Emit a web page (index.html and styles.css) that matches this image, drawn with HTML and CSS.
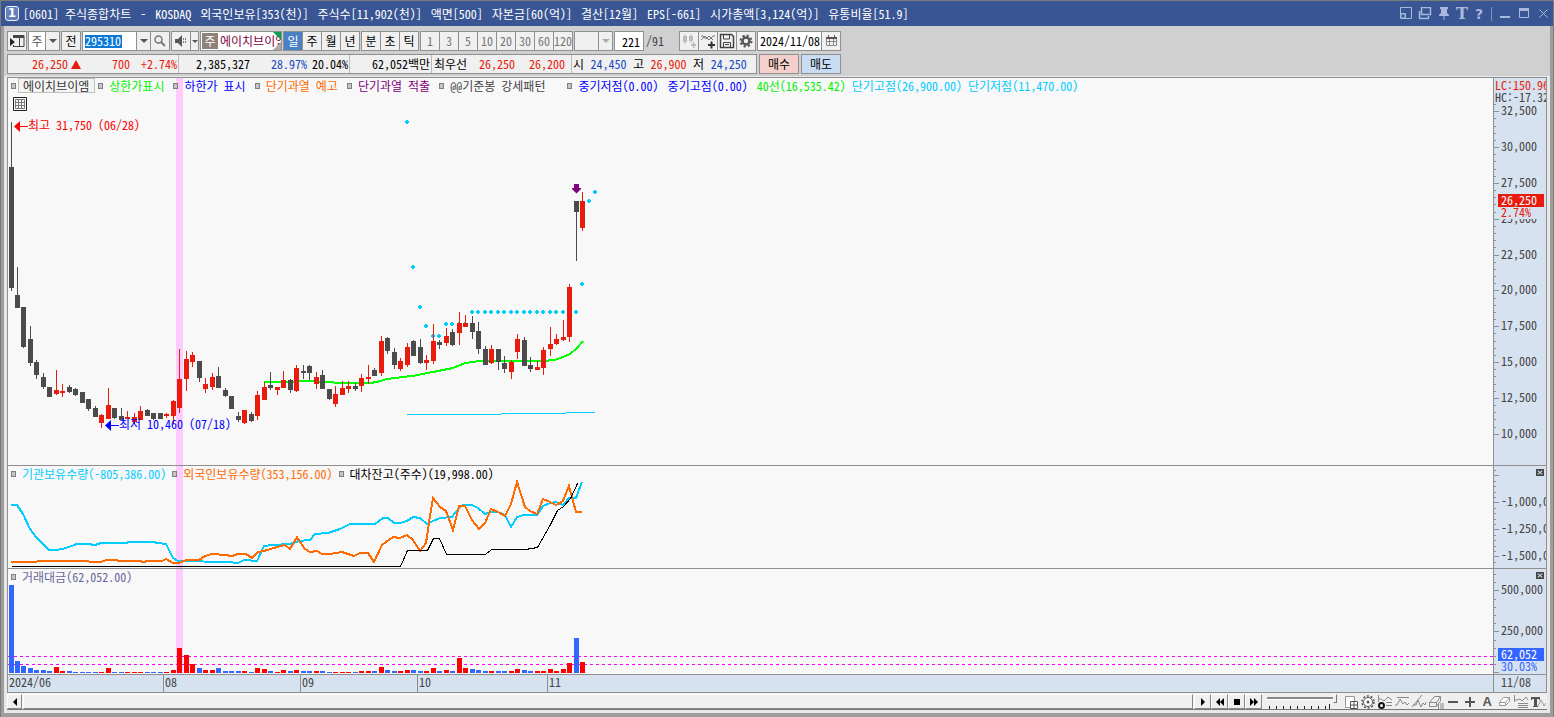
FILE: index.html
```
<!DOCTYPE html>
<html lang="ko">
<head>
<meta charset="utf-8">
<title>[0601] 주식종합차트</title>
<link rel="stylesheet" href="styles.css">
</head>
<body>
<div class="window">
  <header class="titlebar">
    <span class="win-num">1</span>
    <h1 class="title"><span>[0601] 주식종합차트</span> <span>-</span> <span>KOSDAQ</span> <span>외국인보유[353(천)]</span> <span>주식수[11,902(천)]</span> <span>액면[500]</span> <span>자본금[60(억)]</span> <span>결산[12월]</span> <span>EPS[-661]</span> <span>시가총액[3,124(억)]</span> <span>유통비율[51.9]</span></h1>
    <div class="win-tools">
      <button class="wbtn" aria-label="화면 배치"><svg width="13" height="13"><path d="M.5 .5h11v11H.5zM.5 6.500h5v5" /><path d="M1 7h4v4H1z" fill="#3a5593"/></svg></button>
      <button class="wbtn" aria-label="화면 복사"><svg width="14" height="13"><path d="M3.500 .5h9v7h-9zM1.500 4v7.500h9V9" stroke-width="1.500"/></svg></button>
      <button class="wbtn" aria-label="고정"><svg width="12" height="14"><path d="M2 0h8v2H9v4l2 2v1H1V8l2-2V2H2zM5.500 9h1v4h-1z" class="solid"/></svg></button>
      <button class="wbtn serif" aria-label="글꼴">T</button>
      <button class="wbtn quest" aria-label="도움말">?</button>
      <span class="wsep"></span>
      <button class="wbtn" aria-label="최소화"><svg width="11" height="13"><path d="M0 9h10v2H0z" class="solid"/></svg></button>
      <button class="wbtn" aria-label="최대화"><svg width="11" height="13"><path d="M.5 2.500h9v8h-9z"/><path d="M0 1h10v3H0z" class="solid"/></svg></button>
      <button class="wbtn" aria-label="닫기"><svg width="11" height="13"><path d="M1.500 2.500l8 8M9.500 2.500l-8 8"/></svg></button>
    </div>
  </header>

  <section class="toolbar">
    <div class="row">
      <button class="box sq" aria-label="목록 열기"><svg width="15" height="14"><path d="M3.500 1v2M3.500 11v2M3 1.500h11v11H3M9.500 2v10" stroke="#444" fill="none"/><path d="M3 2h11v2H3z" fill="#444"/><path d="M0 4l5 4-5 4z" fill="#222"/></svg></button>
      <div class="box combo"><span class="val gray">주</span><button class="drop" aria-label="종목 구분"></button></div>
      <button class="box sq">전</button>
      <div class="box code">
        <label class="code-in"><input class="code-text" value="295310" aria-label="종목코드"></label>
        <button class="drop" aria-label="코드 목록"></button>
        <button class="cell" aria-label="검색"><svg width="14" height="14"><circle cx="5.500" cy="5.500" r="3.500" fill="none" stroke="#777" stroke-width="1.500"/><path d="M8 8l4 4" stroke="#777" stroke-width="2"/></svg></button>
      </div>
      <div class="box snd">
        <button class="cell" aria-label="소리"><svg width="14" height="14"><path d="M1 5h3l4-4v12L4 9H1z" fill="#555"/><path d="M9.500 4v6M11.500 4v6" stroke="#777" stroke-dasharray="2 1"/></svg></button>
        <button class="drop slim" aria-label="소리 설정"></button>
      </div>
      <div class="box name"><span class="badge">주</span><span class="stock">에이치브이엠</span><i class="tri-g"></i><i class="tri-w"></i></div>
      <div class="box seg"><button class="cell on">일</button><button class="cell">주</button><button class="cell">월</button><button class="cell">년</button></div>
      <div class="box seg"><button class="cell">분</button><button class="cell">초</button><button class="cell">틱</button></div>
      <div class="box seg dim"><button class="cell">1</button><button class="cell">3</button><button class="cell">5</button><button class="cell">10</button><button class="cell">20</button><button class="cell">30</button><button class="cell">60</button><button class="cell">120</button></div>
      <div class="box unit"><span class="blank"></span><button class="drop off" aria-label="주기 선택"></button></div>
      <input class="box count" value="221" aria-label="조회 개수">
      <span class="total">/91</span>
      <div class="box seg tools">
        <button class="cell" aria-label="봉 추가"><svg width="16" height="16"><path d="M2 3h4v6H2zM8 3h4v5H8zM3.500 1h1v10h-1zM9.500 1h1v9h-1zM10 11h5v2h-5zM12 9h1.500v6H12z" fill="#bbb"/></svg></button>
        <button class="cell" aria-label="지표 추가"><svg width="16" height="16"><path d="M1 7l4-4 4 4 4-4h2M1 3h2l3 3 3-3 4 4" stroke="#777" fill="none"/><path d="M8 11h7v2H8zM10.500 8.500h2v7h-2z" fill="#333"/></svg></button>
        <button class="cell" aria-label="저장"><svg width="16" height="16"><path d="M1.500 1.500h11l2 2v11h-13z" fill="none" stroke="#444" stroke-width="1.500"/><path d="M4.500 2v4h6V2M4.500 14V9.500h7V14M6 11.500h4" stroke="#444" fill="none"/></svg></button>
        <button class="cell" aria-label="설정"><svg width="16" height="16"><circle cx="8" cy="8" r="3.500" fill="none" stroke="#555" stroke-width="2.500"/><circle cx="8" cy="8" r="5.500" fill="none" stroke="#555" stroke-width="2" stroke-dasharray="2.200 2.120"/></svg></button>
      </div>
      <div class="box date"><input class="date-text" value="2024/11/08" aria-label="기준일"><button class="cell" aria-label="달력"><svg width="13" height="12"><path d="M1.500 2.500h10v8h-10zM2 6.500h9M4.500 4v7M8.500 4v7" stroke="#888" fill="none"/><path d="M1 2h11v2H1zM3 0h1v2H3zM9 0h1v2H9z" fill="#555"/></svg></button></div>
    </div>
    <div class="row">
      <div class="box quote">
        <div class="q q1 red"><span class="n1">26,250</span><i class="up"></i><span class="n2">700</span><span class="n3">+2.74%</span></div>
        <div class="q q2"><span class="n4">2,385,327</span><span class="n5 blue">28.97%</span><span>20.04%</span></div>
        <div class="q q3"><span>62,052백만</span></div>
        <div class="q q4"><span class="n6">최우선</span><span class="n7 red">26,250</span><span class="red">26,200</span></div>
        <div class="q q5"><span>시</span><span class="pr blue">24,450</span><span>고</span><span class="pr red">26,900</span><span>저</span><span class="pr blue">24,250</span></div>
      </div>
      <button class="box order buy">매수</button>
      <button class="box order sell">매도</button>
    </div>
  </section>

  <main class="chart-wrap">
    <div class="chart">
      <section class="panel price">
        <div class="plot">
          <svg class="layer" id="price" width="100%" height="100%"></svg>
          <div class="legend">
            <i class="mk"></i><span class="tag">에이치브이엠</span>
            <i class="mk"></i><span class="c-green">상한가표시</span>
            <i class="mk"></i><span class="c-blue">하한가 표시</span>
            <i class="mk"></i><span class="c-orange">단기과열 예고</span>
            <i class="mk"></i><span class="c-purple">단기과열 적출</span>
            <i class="mk"></i><span class="c-dark pattern">@@기준봉 강세패턴</span>
            <i class="mk"></i><span class="c-blue">중기저점(0.00)</span>
            <span class="c-blue">중기고점(0.00)</span>
            <span class="c-green near">40선(16,535.42)</span>
            <span class="c-cyan near">단기고점(26,900.00)</span>
            <span class="c-cyan">단기저점(11,470.00)</span>
          </div>
          <button class="grid-btn" aria-label="표 보기"><svg width="14" height="14"><path d="M.5 .5h13v13H.5z" fill="#f8f8f8" stroke="#222"/><path d="M2.500 2.500h9v9h-9zM5.500 3v8M8.500 3v8M3 5.500h8M3 8.500h8" fill="none" stroke="#777"/></svg></button>
        </div>
        <div class="axis"><svg width="52" height="100%"><g transform="translate(-1494 -78)">
          <g id="ticks1"></g>
          <text x="1495" y="90" class="t-red">LC:150.96</text>
          <text x="1495" y="102">HC:-17.32</text>
          <text x="1501" y="115">32,500</text><text x="1501" y="151">30,000</text><text x="1501" y="187">27,500</text><text x="1501" y="223">25,000</text>
          <text x="1501" y="259">22,500</text><text x="1501" y="294">20,000</text><text x="1501" y="330">17,500</text><text x="1501" y="366">15,000</text>
          <text x="1501" y="402">12,500</text><text x="1501" y="438">10,000</text>
          <rect x="1498" y="194" width="46" height="13" fill="#e81b0c"/><rect x="1500" y="207" width="44" height="12" fill="#d7e2f0"/>
          <text x="1501" y="205" class="t-white">26,250</text><text x="1501" y="217" class="t-red">2.74%</text>
        </g></svg></div>
      </section>
      <section class="panel holders">
        <div class="plot">
          <svg class="layer" id="holders" width="100%" height="102"></svg>
          <div class="legend">
            <i class="mk"></i><span class="c-cyan">기관보유수량(-805,386.00)</span>
            <i class="mk"></i><span class="c-orange">외국인보유수량(353,156.00)</span>
            <i class="mk"></i><span class="c-black">대차잔고(주수)(19,998.00)</span>
          </div>
        </div>
        <div class="axis"><svg width="52" height="102"><g transform="translate(-1494 -466)">
          <g id="ticks2"></g>
          <text x="1501" y="506">-1,000,000</text><text x="1501" y="533">-1,250,000</text><text x="1501" y="560">-1,500,000</text>
        </g></svg><button class="close" aria-label="지표 닫기"></button></div>
      </section>
      <section class="panel volume">
        <div class="plot">
          <svg class="layer" id="volume" width="100%" height="105"></svg>
          <div class="legend"><i class="mk"></i><span class="c-slate">거래대금(62,052.00)</span></div>
        </div>
        <div class="axis"><svg width="52" height="105"><g transform="translate(-1494 -569)">
          <g id="ticks3"></g>
          <text x="1501" y="594">500,000</text><text x="1501" y="635">250,000</text>
          <rect x="1498" y="648" width="46" height="13" fill="#3366ff"/>
          <text x="1501" y="659" class="t-white">62,052</text><text x="1501" y="671" class="t-blue">30.03%</text>
        </g></svg><button class="close" aria-label="지표 닫기"></button></div>
      </section>
      <section class="panel dates">
        <div class="days"><span class="m1">2024/06</span><span class="m2">08</span><span class="m3">09</span><span class="m4">10</span><span class="m5">11</span></div>
        <div class="axis last">11/08</div>
      </section>
    </div>
    <footer class="bottom">
      <button class="sb" aria-label="왼쪽으로"><svg width="6" height="8"><path d="M5 0v8L1 4z"/></svg></button>
      <div class="track"></div>
      <button class="sb" aria-label="재생"><svg width="6" height="8"><path d="M1 0v8l4-4z"/></svg></button>
      <button class="sb" aria-label="뒤로"><svg width="10" height="8"><path d="M5 0v8L1 4zM9 0v8L5 4z"/></svg></button>
      <button class="sb" aria-label="정지"><svg width="8" height="8"><path d="M1 1h6v6H1z"/></svg></button>
      <button class="sb" aria-label="앞으로"><svg width="10" height="8"><path d="M1 0v8l4-4zM5 0v8l4-4z"/></svg></button>
      <label class="speed"><input type="range" class="range" value="100" aria-label="속도"><svg width="70" height="5"><path d="M2.500 5V2m7 3V2m7 3V2m7 3V2m7 3V2m7 3V2m7 3V2m7 3V2m7 3V2m4 3V0" stroke="#222"/></svg></label>
      <div class="tools2">
        <button class="ti" aria-label="창 추가"><svg width="16" height="16"><path d="M2.500 2.500h9v11h-9z" fill="#fff" stroke="#999"/><path d="M7.500 7.500h7v7h-7zM11 8v6M8 11h6" fill="#fff" stroke="#555"/></svg></button>
        <button class="ti" aria-label="환경 설정"><svg width="16" height="16"><circle cx="8" cy="8" r="4.500" fill="#fff" stroke="#555"/><circle cx="8" cy="8" r="6" fill="none" stroke="#555" stroke-dasharray="2 1.770" stroke-width="1.500"/><circle cx="8" cy="8" r="1.500" fill="#555"/></svg></button>
        <button class="ti" aria-label="지표 설정"><svg width="16" height="16"><path d="M1.500 1v7M2 5h2l3 2 4-4 4 3M9 11.500h6M9 8.500h6" fill="none" stroke="#888"/><circle cx="4.500" cy="11.500" r="2.500" fill="#fff" stroke="#111" stroke-width="2"/></svg></button>
        <button class="ti" aria-label="수평선"><svg width="16" height="16"><path d="M3 3.500h12M1 11h2l3-6 3 5 2-2 2 3 2-2" fill="none" stroke="#888"/></svg></button>
        <button class="ti" aria-label="추세선"><svg width="16" height="16"><path d="M1 13L11 1M2 11h3l2-5 3 7 2-4 2 2 1-3" fill="none" stroke="#888"/></svg></button>
        <button class="ti" aria-label="모두 지우기"><svg width="16" height="16"><path d="M1.500 8.500l5-6h6l-4 6zM1.500 8.500v4h7v-4M8.500 12l4-5V3M10.500 10v5M13 9v6M15 9v6" fill="none" stroke="#888"/></svg></button>
        <button class="ti" aria-label="축소"><svg width="16" height="16"><path d="M3 7h10v2H3z" fill="#555"/></svg></button>
        <button class="ti" aria-label="확대"><svg width="16" height="16"><path d="M3 7h10v2H3zM7 3h2v10H7z" fill="#555"/></svg></button>
        <button class="ti letter">A</button>
        <button class="ti" aria-label="지우개"><svg width="16" height="16"><path d="M3.500 8.500l4-5h6l-4 5zM3.500 8.500v3h6v-3M9.500 11.500l4-4v-4" fill="#fff" stroke="#999"/></svg></button>
        <button class="ti" aria-label="지표 목록"><svg width="16" height="16"><path d="M1.500 1v7M2 6h2l3-1 2 2 4-4 2 3M5 9.500h10M5 11.500h10M5 13.500h10" fill="none" stroke="#888"/></svg></button>
        <button class="ti" aria-label="문자 표시"><svg width="16" height="16"><path d="M1 3h9v3H9V5H7v7h1v1H3v-1h1V5H2v1H1z" fill="#555"/><path d="M8 12l3-6 3 6 2-3" fill="none" stroke="#999"/></svg></button>
      </div>
    </footer>
  </main>
</div>
<script src="script.js"></script>
</body>
</html>
```
FILE: styles.css
```
:root {
  --line: #8f8f8f;
  --face: #f0f0f0;
  --axis: #d7e2f0;
}
* { box-sizing: border-box; }
body {
  margin: 0;
  font: 12px/16px "Noto Sans Mono CJK KR", "Liberation Sans Narrow", "Noto Sans CJK KR", sans-serif;
  color: #000;
}
button, input { font: inherit; color: inherit; margin: 0; padding: 0; border: 0; background: none; border-radius: 0; min-width: 0; outline: 0; }
svg { display: block; flex: none; }

.window {
  display: flex;
  flex-direction: column;
  min-height: 100vh;
  padding: 0 3px 4px;
  background: #9d9d9d;
  border: 1px solid #7b7b7b;
  border-width: 1px 1px 0;
}
.titlebar {
  display: flex;
  align-items: center;
  height: 25px;
  margin: 0 -3px;
  padding: 0 4px;
  background: #3a5593;
  color: #fff;
}
.win-num {
  width: 14px;
  height: 15px;
  border: 1px solid #e8eefc;
  border-radius: 3px;
  background: #6480bb;
  font: bold 12px/13px "DejaVu Sans", sans-serif;
  text-align: center;
}
.title { flex: 1; display: flex; gap: 9px; margin: 0 0 0 4px; font-size: 12px; font-weight: normal; white-space: nowrap; }
.win-tools { display: flex; align-items: center; gap: 7px; color: #a9b8dd; }
.wbtn { display: flex; justify-content: center; width: 12px; color: #a9b8dd; }
.wbtn svg { fill: none; stroke: #a9b8dd; }
.wbtn .solid { fill: #a9b8dd; stroke: none; }
.serif, .quest { width: 10px; }
.serif { font: bold 16px/16px "DejaVu Serif", serif; }
.quest { font: bold 14px/16px "DejaVu Sans", sans-serif; }
.wsep { width: 1px; height: 14px; background: #7f92bf; }

.toolbar { display: flex; flex-direction: column; gap: 3px; padding: 5px 3px 2px; background: #d0d0d0; }
.row { display: flex; gap: 1px; }
.box { display: flex; flex: none; height: 20px; border: 1px solid var(--line); background: var(--face); align-items: stretch; }
.sq { width: 20px; align-items: center; justify-content: center; }
.drop { position: relative; width: 14px; border-left: 1px solid var(--line); background: var(--face); }
.drop::after { content: ""; display: block; width: 0; margin: auto; border: 4px solid transparent; border-top-color: #555; border-bottom: 0; }
.slim { width: 9px; }
.slim::after { border-width: 3px 3px 0; }
.off::after { border-top-color: #aaa; }
.val, .stock { background: #fff; line-height: 18px; }
.val { flex: 1; text-align: center; }
.combo { width: 32px; }
.gray { color: #555; }
.code { width: 88px; }
.code-in { flex: 1; display: flex; align-items: center; background: #fff; padding-left: 2px; }
.code-text { width: 37px; height: 13px; background: #0a78d7; color: #fff; }
.cell { flex: none; display: flex; align-items: center; justify-content: center; width: 19px; border-left: 1px solid var(--line); overflow: hidden; }
.cell:first-child { border-left: 0; width: 18px; }
.snd { width: 28px; }
.name { position: relative; width: 82px; background: #fff; overflow: hidden; padding: 1px; }
.badge { flex: none; width: 16px; background: #90827a; color: #fff; text-align: center; }
.stock { flex: none; width: 62px; margin-left: 2px; line-height: 16px; color: #7d0044; overflow: hidden; white-space: nowrap; }
.tri-g, .tri-w { position: absolute; right: 0; border: 4px solid transparent; }
.tri-g { top: 0; border-top-color: #08a04b; border-right-color: #08a04b; }
.tri-w { bottom: 0; border-bottom-color: #aaa; border-right-color: #aaa; }
.on { background: #4a80c4; color: #fff; }
.dim { color: #777; }
.unit { width: 39px; }
.blank { flex: 1; }
.count { width: 30px; padding-right: 3px; background: #fff; text-align: right; }
.total { width: 33px; padding-left: 1px; line-height: 20px; color: #444; }
.tools .cell { background: var(--face); }
.date { width: 84px; background: #fff; }
.date .cell { background: var(--face); }
.date-text { flex: 1; padding-left: 2px; }

.quote { width: 750px; line-height: 18px; white-space: pre; }
.q { display: flex; flex: none; align-items: center; border-right: 1px solid #bbb; }
.q:last-child { border: 0; }
.red { color: #e81b0c; }
.blue { color: #1848c4; }
.q1 { width: 171px; }
.n1 { width: 60px; text-align: right; }
.up { width: 0; margin: 0 0 0 3px; border: 5px solid transparent; border-top: 0; border-bottom: 9px solid #e81b0c; }
.n2 { width: 49px; text-align: right; }
.n3 { flex: 1; text-align: right; padding-right: 1px; }
.q2 { width: 171px; justify-content: flex-end; padding-right: 1px; }
.n4 { margin-right: 21px; }
.n5 { margin-right: 5px; }
.q3 { width: 82px; justify-content: flex-end; padding-right: 1px; }
.q4 { width: 140px; padding-left: 2px; }
.n6 { width: 45px; }
.n7 { width: 50px; }
.q5 { flex: 1; padding-left: 1px; }
.pr { width: 49px; text-align: center; }
.order { width: 40px; margin-left: 1px; align-items: center; justify-content: center; }
.buy { background: #f5cfca; }
.sell { background: #c8ddf4; }

.chart-wrap { flex: 1; display: flex; flex-direction: column; padding: 1px 3px 3px; background: #e8e8e8; }
.chart { flex: 1; display: flex; flex-direction: column; border: 1px solid var(--line); border-bottom: 0; background: #f8f8f8; }
.panel { display: flex; border-bottom: 1px solid var(--line); }
.price { flex: 1; min-height: 380px; }
.plot { flex: 1; min-width: 0; display: grid; grid-template-rows: 17px 18px 1fr; overflow: hidden; }
.layer { grid-area: 1 / 1 / -1 / 2; }
.holders .plot, .volume .plot { grid-template-rows: 17px 1fr; }
.legend { grid-area: 1 / 1; display: flex; align-items: center; height: 15px; padding-left: 3px; white-space: nowrap; z-index: 1; }
.mk { flex: none; width: 5px; height: 6px; margin-right: 6px; border: 1px solid #808080; background: #c4c4c4; }
.legend span { margin-right: 6px; }
.price .legend span { margin-right: 9px; }
.price .legend .tag { margin: 0 3px 0 -4px; padding: 0 5px 0 4px; height: 15px; line-height: 13px; border: 1px solid #c0c0c0; background: #f4f4f4; color: #333; }
.price .legend .pattern { margin-right: 22px; }
.price .legend .near { margin-right: 6px; }
.grid-btn { grid-area: 2 / 1; justify-self: start; align-self: center; margin-left: 5px; z-index: 1; }
.c-green { color: #00f000; }
.c-blue { color: #00f; }
.c-orange { color: #ff6a00; }
.c-purple { color: #800080; }
.c-dark { color: #444; }
.c-cyan { color: #00ccff; }
.c-black { color: #000; }
.c-slate { color: #666699; }
.axis { position: relative; flex: none; width: 53px; border-left: 1px solid var(--line); background: var(--axis); overflow: hidden; }
.axis text { fill: #444; }
.axis .t-red { fill: #e81b0c; }
.axis .t-white { fill: #fff; }
.axis .t-blue { fill: #3366ff; }
.close { position: absolute; right: 2px; top: 3px; width: 8px; height: 7px; background: #444; }
.close::before, .close::after { content: ""; position: absolute; left: 1px; top: 3px; width: 6px; height: 1px; background: #d7e2f0; transform: rotate(40deg); }
.close::after { transform: rotate(-40deg); }
.dates { height: 18px; background: var(--axis); color: #444; line-height: 14px; }
.days { flex: 1; display: flex; }
.days span { padding-left: 1px; border-left: 1px solid var(--line); }
.days .m1 { width: 155px; border: 0; }
.m2 { width: 137px; }
.m3 { width: 117px; }
.m4 { width: 130px; }
.last { padding-left: 7px; }
.bottom { display: flex; height: 17px; align-items: stretch; padding: 1px 0 0; background: #efefef; border-bottom: 1px solid #777; }
.sb { flex: none; display: flex; align-items: center; justify-content: center; width: 17px; border: 1px solid; border-color: #fff #888 #888 #fff; }
.sb:first-child { width: 15px; }
.track { flex: 1; margin: 0 1px; border: 1px solid; border-color: #fff #888 #888 #fff; }
.speed { flex: none; display: flex; flex-direction: column; justify-content: space-between; width: 70px; margin: 0 5px 0 5px; }
.range { appearance: none; width: 70px; height: 9px; background: linear-gradient(#888 0 2px, #fff 2px 3px, transparent 3px) 0 3px no-repeat; }
.range::-webkit-slider-thumb { appearance: none; width: 4px; height: 9px; border: 1px solid; border-color: #fff #777 #777 #fff; background: #eee; }
.tools2 { display: flex; justify-content: space-between; width: 205px; }
.ti { display: flex; align-items: center; justify-content: center; width: 17px; }
.letter { font: bold 13px/15px "Liberation Sans", sans-serif; color: #555; }
.note-high { fill: #f00; }
.note-low { fill: #00f; }
```
FILE: script.js
```
const NS = "http://www.w3.org/2000/svg";
const GRAY = "#4b4b4b", RED = "#e81b0c", CYAN = "#00ccff";

function add(parent, tag, attrs, text) {
  const el = document.createElementNS(NS, tag);
  for (const k in attrs) el.setAttribute(k, attrs[k]);
  if (text) el.textContent = text;
  parent.appendChild(el);
  return el;
}
function pane(id, top) {
  const svg = document.getElementById(id);
  add(svg, "rect", { x: 168, y: 0, width: 7, height: "100%", fill: "#ffccff" });
  return add(svg, "g", { transform: `translate(-8 ${-top})` });
}
const rect = (g, x, y, w, h, fill) => add(g, "rect", { x, y, width: w, height: h, fill });
const line = (g, points, stroke, w) => add(g, "polyline", { points, stroke, "stroke-width": w, fill: "none", transform: w === 1 ? "translate(.5 .5)" : "translate(0 0)", "shape-rendering": "crispEdges" });
const barX = i => 11 + Math.floor(i * 6.5 - .01 + (i === 0 ? .01 : 0));

/* k = falling, r = rising; high, body top, body bottom, low */
const candles = `k122,167,288,291 k267,295,308,308 k307,307,347,348 k326,339,363,366 k360,362,375,379 k373,377,387,389
k387,387,397,397 r370,390,394,395 r384,391,393,397 k385,387,392,393 k388,389,395,396 k392,392,403,403 k399,399,409,411
k406,408,417,417 r414,415,423,428 r388,405,419,419 k408,408,418,419 k408,416,420,420 r411,417,419,419 r413,417,422,424
r406,411,420,420 k409,410,416,416 k413,413,419,420 k413,413,419,419 r413,414,416,418 r400,401,416,424 r349,379,408,413
r351,359,379,391 r352,355,362,367 k361,361,378,382 r378,384,389,393 r373,377,387,390 k367,376,388,388 k388,390,396,397
k396,396,409,409 k412,416,420,422 r410,410,423,424 k412,414,421,422 r391,395,416,420 r382,387,400,400 k372,385,388,390
r387,387,390,395 r371,380,388,388 k379,380,390,393 r365,368,391,392 k365,371,373,379 k365,366,373,380 r372,377,384,389
k370,375,389,389 k389,389,399,400 r386,394,404,407 r381,388,395,395 r381,386,389,393 k383,386,389,391 r374,378,386,392
r365,377,379,384 k368,370,376,376 r336,341,373,376 k337,338,351,354 k348,352,365,369 r358,361,369,371 r343,347,365,367
k340,341,356,356 k339,347,363,364 r355,360,363,370 r324,341,361,364 k340,342,345,349 r328,336,343,346 k329,332,345,346
r312,323,333,345 r315,323,327,327 k316,323,332,339 k322,331,349,354 k346,349,365,365 r345,349,363,364 k349,349,362,370
k356,363,369,373 r360,362,372,379 r334,339,352,359 k337,340,366,366 k357,365,369,372 r361,367,370,370 r347,350,368,375
r327,344,349,356 r334,339,344,345 r320,337,340,341 r284,287,337,342 k201,201,212,261 r192,201,228,231`.split(/\s+/);

const p = pane("price", 78);
line(p, "264,382 295,382 300,381 312,381 325,382 343,383 370,383 377,382 387,379 403,377 412,376 433,372 453,368 465,363 480,361 542,361 555,360 563,357 570,354 577,348 583,341", "#00ff00", 2);
const dots = [[407,122],[413,267],[420,307],[426,326],[433,336],[439,336],[446,324],[452,324],[459,324],[465,324],[582,284],[589,201],[595,192]];
for (let i = 71; i < 88; i++) dots.push([barX(i), 312]);
for (const [x, y] of dots) {
  rect(p, x - 2, y - 1, 4, 2, CYAN);
  rect(p, x - 1, y - 2, 2, 4, CYAN);
}
rect(p, 407, 414, 94, 1, CYAN);
rect(p, 501, 413, 65, 1, CYAN);
rect(p, 566, 412, 29, 1, CYAN);
candles.forEach((c, i) => {
  const [hi, top, bottom, lo] = c.slice(1).split(",").map(Number);
  const fill = c[0] === "r" ? RED : GRAY, x = barX(i);
  rect(p, x, hi, 1, lo - hi, fill);
  rect(p, x - 2, top, 5, bottom - top, fill);
});
add(p, "path", { d: "M574 184h5v4h2v1l-4.500 4.500-4.500-4.500v-1h2z", fill: "#800080" });
add(p, "path", { d: "M14 126.500l6-5.500v5h8v1h-8v5z", fill: "#f00" });
add(p, "text", { x: 28, y: 130, class: "note-high" }, "최고 31,750 (06/28)");
add(p, "path", { d: "M105 425.500l6-5.500v5h8v1h-8v5z", fill: "#00f" });
add(p, "text", { x: 119, y: 429, class: "note-low" }, "최저 10,460 (07/18)");

const h = pane("holders", 466);
line(h, "11,505 17,505 23,514 30,529 36,537 43,544 49,550 56,550 62,549 69,547 77,544 88,544 95,545 101,543 125,543 130,542 153,542 158,543 166,544 173,558 178,561 228,562 238,563 244,560 257,561 264,546 272,545 290,544 299,541 310,540 315,534 328,533 340,529 350,524 375,524 383,518 388,518 394,523 400,523 407,521 413,517 420,518 427,524 433,521 440,518 452,517 459,508 463,505 472,505 478,508 485,514 491,512 498,512 505,515 511,527 517,517 524,515 537,515 543,506 550,503 556,502 563,505 569,498 576,498 582,482", CYAN, 2);
line(h, "11,562 36,562 38,561 88,561 90,562 101,562 106,560 114,560 121,561 140,561 143,562 148,561 162,561 166,559 173,563 179,563 186,560 199,560 205,556 212,554 225,555 232,556 238,554 246,554 252,558 258,552 264,551 277,547 285,545 290,549 297,537 300,542 305,549 310,552 317,551 322,554 330,554 342,552 354,556 360,553 368,553 374,562 382,545 393,537 400,538 407,535 413,540 420,551 426,543 430,516 433,498 440,507 446,511 453,530 459,506 465,506 472,520 479,529 485,523 491,509 498,512 505,516 511,504 517,482 525,507 530,511 537,514 543,499 550,502 556,505 563,501 569,486 576,512 582,512", "#ff6a00", 2);
line(h, "11,566 400,566 407,550 427,550 433,538 439,538 446,554 485,554 491,549 525,549 537,547 550,524 557,510 563,506 570,498 577,483", "#000", 1);

const volumes = `b585 b661 b666 b668 b670 b670 b671 r667 r671 b671 b672 b672 b672 b672 r672 r668 b672 b672 r672 r672 r672 b672 b672
b672 r672 r670 r648 r655 r664 b668 r670 r670 b668 b671 b671 b671 r671 b672 r668 r669 b671 r672 r670 b671 r670 b671 b671 r671
b671 b672 r672 r672 r672 b672 r671 r671 b671 r667 b670 b671 r671 r670 b670 b671 r671 r668 b671 r670 b671 r658 r668 b669 b670
b671 r671 b671 b671 r671 r669 b670 b671 r671 r671 r669 r671 r669 r663 b638 r662`.split(/\s+/);
const v = pane("volume", 569);
for (const y of [87.5, 95.5]) {
  const d = add(v.parentNode, "line", { x1: 0, x2: "100%", y1: y, y2: y, stroke: "#ff00ff", "stroke-dasharray": "3 3" });
  v.before(d);
}
volumes.forEach((s, i) => {
  const y = Number(s.slice(1));
  rect(v, barX(i) - 2, y, 5, 673 - y, s[0] === "r" ? "#ff0000" : "#3366ff");
});

function ticks(id, first, step, count, offset) {
  const g = document.getElementById(id);
  for (let i = 0; i < count; i++)
    rect(g, 1494, Math.round(first + i * step), i % 5 === offset ? 5 : 2, 1, "#8f8f8f");
}
ticks("ticks1", 104, 7.17, 47, 1);
ticks("ticks2", 470, 5.4, 18, 1);
ticks("ticks3", 574, 8.2, 13, 2);
```
